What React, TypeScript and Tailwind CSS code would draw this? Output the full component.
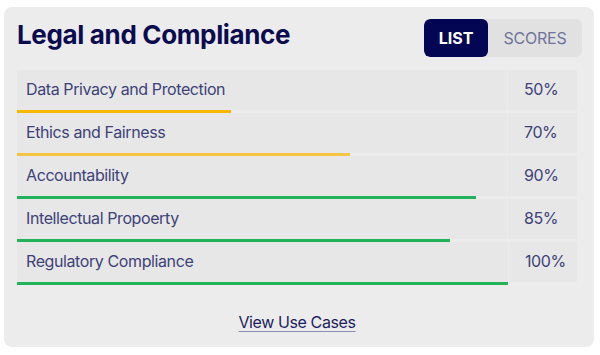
const items = [
  { name: "Data Privacy and Protection", value: 50, bar: 214, color: "bg-[#f8b800]" },
  { name: "Ethics and Fairness", value: 70, bar: 333, color: "bg-[#f5c443]" },
  { name: "Accountability", value: 90, bar: 459, color: "bg-[#22b35a]" },
  { name: "Intellectual Propoerty", value: 85, bar: 433, color: "bg-[#22b35a]" },
  { name: "Regulatory Compliance", value: 100, bar: 491, color: "bg-[#22b35a]" },
]

export default function App() {
  return (
    <div className="w-[600px] h-[355px] bg-white pt-[7px] pl-[4px] font-['Inter',sans-serif]">
      <div className="w-[590px] h-[340px] bg-[#ececec] rounded-lg pt-[12px] px-[13px] flex flex-col">
        <div className="flex items-start justify-between">
          <h1 className="text-[26px] leading-[31px] font-bold text-[#0b0c4f] tracking-[-0.35px]">Legal and Compliance</h1>
          <div className="flex h-[38px] rounded-md overflow-hidden bg-[#e1e1e1] mr-[-1px]">
            <div className="w-[64px] flex items-center justify-center bg-[#030652] text-white font-bold text-[16px] rounded-md">LIST</div>
            <div className="w-[94px] flex items-center justify-center text-[#6f7499] text-[16px] tracking-[-0.2px]">SCORES</div>
          </div>
        </div>
        <div className="mt-[13px] mr-[4px] flex flex-col">
          {items.map((it) => (
            <div key={it.name} className="flex gap-px">
              <div className="flex-1 flex flex-col bg-[#e7e7e7]">
                <div className="h-[40px] flex items-center pl-[9px] pb-[3px] text-[16px] tracking-[-0.4px] text-[#3d4278]">{it.name}</div>
                <div className="h-[3px] bg-[#ececec]">
                  <div className={`h-[3px] ${it.color}`} style={{ width: it.bar }} />
                </div>
              </div>
              <div className="w-[69px] h-[40px] flex items-center pl-[16px] pb-[3px] bg-[#e7e7e7] text-[16px] tracking-[-0.4px] text-[#3d4278]">{it.value}%</div>
            </div>
          ))}
        </div>
        <div className="mt-[25px] flex justify-center pr-[4px]">
          <a className="text-[16px] tracking-[-0.4px] text-[#1b1f5e] underline decoration-[#8a8db0] underline-offset-[3px]">View Use Cases</a>
        </div>
      </div>
    </div>
  )
}
